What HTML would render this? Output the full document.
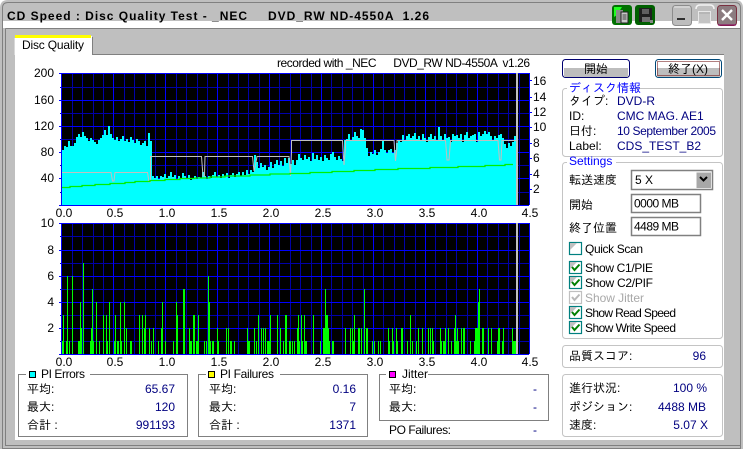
<!DOCTYPE html>
<html><head><meta charset="utf-8">
<style>
html,body{margin:0;padding:0;background:#bfbfbf;width:743px;height:449px;overflow:hidden}
svg{display:block;position:absolute;left:0;top:0}
text{font-family:"Liberation Sans","IPAGothic","Noto Sans CJK JP",sans-serif;font-size:12px;fill:#000;white-space:pre}
.n{fill:#000080}
.e{text-anchor:end}
.m{text-anchor:middle}
.bl{fill:#0000ff}
.gr{fill:#a8a8a8}
.t{font-weight:bold;font-size:12px}
</style></head>
<body>
<svg width="743" height="449" viewBox="0 0 743 449" xmlns="http://www.w3.org/2000/svg">
<!-- window -->
<rect width="743" height="449" fill="#fff"/>
<path d="M0 449V8Q0 0 8 0H735Q743 0 743 8V449Z" fill="#bfbfbf"/>
<path d="M2.500 449V8Q2.500 2.500 8 2.500H735Q740.500 2.500 740.500 8V449" fill="none" stroke="#808080"/>
<rect x="3" y="21" width="737" height="7" fill="#fff"/>
<path d="M5.500 28.500H741M5.500 28.500V445.500H741" fill="none" stroke="#808080"/>
<path d="M2 448.500H741" stroke="#808080"/>
<text x="7" y="20" class="t" textLength="240" lengthAdjust="spacing">CD Speed : Disc Quality Test - _NEC</text>
<text x="268" y="20" class="t" textLength="161" lengthAdjust="spacing">DVD_RW ND-4550A  1.26</text>
<!-- title icons -->
<rect x="612" y="5" width="20" height="20" rx="3" fill="#007000"/>
<path d="M614 7h8l-5 8-3 2z" fill="#20ff20"/>
<path d="M616 10h7v13h-7z" fill="#8a8a8a"/><path d="M621 12h7v11h-7z" fill="#c8c8c8" stroke="#202020"/>
<path d="M622.500 15h4M622.500 17h4M622.500 19h4" stroke="#404040"/>
<rect x="635" y="5" width="20" height="20" rx="3" fill="#006000"/>
<path d="M639 8h13v14h-13z" fill="#202020"/><path d="M642 9h7v5h-7z" fill="#606060"/><path d="M642 17h8v5h-8z" fill="#707070"/><rect x="650" y="20" width="3" height="3" fill="#888"/>
<rect x="672.500" y="5.500" width="19" height="20" rx="3" fill="#bdbdbd" stroke="#8c8c8c"/>
<path d="M674 7h16" stroke="#e8e8e8"/>
<rect x="677" y="18" width="8" height="2" fill="#303030"/>
<path d="M696 9q0-4 4-4h10q4 0 4 4" fill="none" stroke="#f4f4f4" stroke-width="1.500"/>
<rect x="698.500" y="11.500" width="12" height="12" fill="#c4c4c4" stroke="#e8e8e8"/>
<path d="M699 13h11" stroke="#a8a8a8"/>
<rect x="717.500" y="5.500" width="19" height="20" rx="3" fill="#8c7c80" stroke="#7a3040"/>
<path d="M718 25h18" stroke="#900060"/>
<path d="M722 10l10 10M732 10l-10 10" stroke="#fff" stroke-width="2.400"/>
<!-- tab + panel -->
<rect x="15" y="55" width="709" height="385" fill="#fff"/>
<rect x="15" y="36" width="77" height="20" fill="#fff"/>
<rect x="15" y="35" width="76" height="3" fill="#ffff00"/>
<path d="M92.500 37V54.500H724" fill="none" stroke="#808080"/>
<path d="M14.500 38V55" stroke="#d8d8d8"/>
<text x="22" y="49" textLength="62">Disc Quality</text>
<text x="277" y="67" textLength="253" lengthAdjust="spacing">recorded with _NEC      DVD_RW ND-4550A  v1.26</text>
<!-- chart 1 -->
<rect x="61" y="73" width="468" height="132" fill="#000"/>
<path shape-rendering="crispEdges" stroke="#0000a8" d="M72.500 73V205M82.500 73V205M93.500 73V205M103.500 73V205M124.500 73V205M134.500 73V205M145.500 73V205M155.500 73V205M176.500 73V205M186.500 73V205M197.500 73V205M207.500 73V205M228.500 73V205M238.500 73V205M248.500 73V205M259.500 73V205M279.500 73V205M290.500 73V205M300.500 73V205M311.500 73V205M331.500 73V205M342.500 73V205M352.500 73V205M363.500 73V205M383.500 73V205M394.500 73V205M404.500 73V205M415.500 73V205M435.500 73V205M446.500 73V205M456.500 73V205M467.500 73V205M487.500 73V205M498.500 73V205M508.500 73V205M519.500 73V205M60 87.500H529M60 113.500H529M60 139.500H529M60 165.500H529M60 192.500H529"/>
<path shape-rendering="crispEdges" stroke="#0000ff" d="M61.500 73V205M113.500 73V205M165.500 73V205M217.500 73V205M269.500 73V205M321.500 73V205M373.500 73V205M425.500 73V205M477.500 73V205M529.500 73V205M59 73.500H529M59 100.500H529M59 126.500H529M59 152.500H529M59 178.500H529M59 205.500H529"/>
<!-- cyan -->
<g fill="#00ffff" shape-rendering="crispEdges">
<path d="M62 205V150h2V146h2V147h2V141h2V146h2V146h2V143h2V137h2V134h2V137h2V132h2V136h2V138h2V141h2V138h2V140h2V142h2V144h2V140h2V138h2V135h2V130h2V135h2V126h2V134h2V138h2V140h2V137h2V141h2V139h2V136h2V141h2V139h2V142h2V137h2V140h2V143h2V139h2V141h2V145h2V143h2V141h2V146h2V133h2V141h2V205Z"/>
<path d="M152 205V176h2V178h2V176h2V179h2V176h2V177h2V174h2V178h2V176h2V172h2V177h2V175h2V179h2V176h2V178h2V173h2V176h2V178h2V175h2V180h2V178h2V176h2V179h2V177h2V178h2V172h2V176h2V179h2V176h2V178h2V175h2V172h2V177h2V175h2V178h2V174h2V176h2V173h2V178h2V175h2V173h2V177h2V174h2V172h2V176h2V172h2V175h2V170h2V174h2V170h2V172h2V205Z"/>
<path d="M254 205V155h2V162h2V168h2V163h2V167h2V165h2V170h2V167h2V162h2V168h2V164h2V160h2V165h2V161h2V166h2V158h2V163h2V158h2V205Z"/>
<path d="M290 205V164h2V160h2V165h2V160h2V154h2V158h2V160h2V155h2V159h2V157h2V161h2V153h2V159h2V155h2V160h2V157h2V161h2V155h2V158h2V160h2V154h2V152h2V157h2V160h2V156h2V159h2V161h2V205Z"/>
<path d="M344 205V140h2V139h2V134h2V140h2V137h2V132h2V136h2V138h2V129h2V130h2V138h2V148h2V205Z"/>
<path d="M368 205V156h2V152h2V154h2V150h2V155h2V152h2V149h2V141h2V150h2V153h2V150h2V149h2V153h2V150h2V205Z"/>
<path d="M396 205V143h2V140h2V142h2V135h2V140h2V136h2V134h2V138h2V136h2V133h2V139h2V136h2V140h2V134h2V138h2V142h2V137h2V134h2V139h2V136h2V141h2V127h2V136h2V140h2V134h2V138h2V137h2V142h2V134h2V136h2V135h2V138h2V134h2V142h2V135h2V132h2V138h2V136h2V135h2V134h2V142h2V132h2V136h2V134h2V131h2V134h2V132h2V136h2V140h2V136h2V138h2V135h2V134h2V138h2V144h2V148h2V143h2V146h2V142h2V136h2V205Z"/>
</g>
<path fill="none" stroke="#c0c0c0" stroke-width="1" d="M62 172.500H111L112.500 181L114 181L115 172.500H147.500L149 182L150.500 182V156.500H201.500L203 176H204.500L205 156.500H252.500L254 171L255.500 165L257 156.500H289L290.500 176L291.500 152V140.500H342.500L344 165L345.500 148V140.500H394L395.500 161L397 148V140.500H445.500L447 160L449 160L450.500 140.500H498L499.500 160L501 160L502 140.500H516"/>
<path fill="none" stroke="#00f000" stroke-width="1.300" d="M62 187.500H70V186.500H82V185.500H95V184.500H110V183.500H125V182.500H135V181.500H150V180.500H165V179.500H180V178.500H195V178H210V177H225V176H250V175H270V174H290V173.500H310V172.500H332V171.500H354V170.500H375V169.500H398V168.500H430V167.500H458V166.500H485V165.500H505V164.500H513"/>
<rect x="516" y="73" width="2" height="132" fill="#c0c0c0"/>
<!-- right ticks chart1 -->
<path stroke="#0000ff" d="M529 80.500h3M529 97.500h3M529 112.500h3M529 127.500h3M529 143.500h3M529 158.500h3M529 174.500h3M529 189.500h3"/>
<text x="533" y="85">16</text><text x="533" y="101">14</text><text x="533" y="116">12</text><text x="533" y="131">10</text><text x="533" y="147">8</text><text x="533" y="162">6</text><text x="533" y="178">4</text><text x="533" y="193">2</text>
<text x="54" y="77" class="e">200</text><text x="54" y="104" class="e">160</text><text x="54" y="130" class="e">120</text><text x="54" y="156" class="e">80</text><text x="54" y="182" class="e">40</text>
<text x="64" y="217" class="m">0.0</text><text x="115" y="217" class="m">0.5</text><text x="167" y="217" class="m">1.0</text><text x="219" y="217" class="m">1.5</text><text x="271" y="217" class="m">2.0</text><text x="323" y="217" class="m">2.5</text><text x="375" y="217" class="m">3.0</text><text x="427" y="217" class="m">3.5</text><text x="479" y="217" class="m">4.0</text><text x="530" y="217" class="m">4.5</text>
<!-- chart 2 -->
<rect x="61" y="223" width="468" height="131" fill="#000"/>
<path shape-rendering="crispEdges" stroke="#0000a8" d="M72.500 223V354M82.500 223V354M93.500 223V354M103.500 223V354M124.500 223V354M134.500 223V354M145.500 223V354M155.500 223V354M176.500 223V354M186.500 223V354M197.500 223V354M207.500 223V354M228.500 223V354M238.500 223V354M248.500 223V354M259.500 223V354M279.500 223V354M290.500 223V354M300.500 223V354M311.500 223V354M331.500 223V354M342.500 223V354M352.500 223V354M363.500 223V354M383.500 223V354M394.500 223V354M404.500 223V354M415.500 223V354M435.500 223V354M446.500 223V354M456.500 223V354M467.500 223V354M487.500 223V354M498.500 223V354M508.500 223V354M519.500 223V354M60 236.500H529M60 263.500H529M60 289.500H529M60 315.500H529M60 341.500H529"/>
<path shape-rendering="crispEdges" stroke="#0000ff" d="M61.500 223V354M113.500 223V354M165.500 223V354M217.500 223V354M269.500 223V354M321.500 223V354M373.500 223V354M425.500 223V354M477.500 223V354M529.500 223V354M59 223.500H529M59 250.500H529M59 276.500H529M59 302.500H529M59 328.500H529M59 354.500H529"/>
<!-- bars width 1 -->
<path fill="none" stroke="#00ff00" shape-rendering="crispEdges" d="M63.500 354V315M67.500 354V276M69.500 354V341M72.500 354V276M80.500 354V302M81.500 354V328M83.500 354V263M91.500 354V328M92.500 354V289M93.500 354V341M96.500 354V302M99.500 354V341M103.500 354V315M106.500 354V315M107.500 354V341M109.500 354V302M114.500 354V341M115.500 354V315M120.500 354V302M121.500 354V341M124.500 354V302M126.500 354V328M139.500 354V315M142.500 354V315M144.500 354V328M145.500 354V315M149.500 354V328M151.500 354V341M153.500 354V328M158.500 354V341M161.500 354V328M162.500 354V302M165.500 354V341M173.500 354V341M176.500 354V302M177.500 354V315M189.500 354V328M198.500 354V315M204.500 354V341M206.500 354V341M208.500 354V276M209.500 354V302M210.500 354V341M217.500 354V328M218.500 354V341M226.500 354V328M228.500 354V328M234.500 354V341M247.500 354V328M254.500 354V328M256.500 354V341M258.500 354V315M261.500 354V328M263.500 354V328M265.500 354V328M270.500 354V315M277.500 354V315M280.500 354V328M283.500 354V341M286.500 354V328M292.500 354V341M294.500 354V341M297.500 354V328M298.500 354V315M299.500 354V341M301.500 354V315M302.500 354V341M304.500 354V315M313.500 354V315M320.500 354V341M325.500 354V289M328.500 354V328M329.500 354V341M345.500 354V328M350.500 354V328M352.500 354V328M353.500 354V341M354.500 354V315M361.500 354V328M364.500 354V289M372.500 354V341M374.500 354V341M378.500 354V341M380.500 354V341M388.500 354V328M389.500 354V341M392.500 354V328M393.500 354V341M396.500 354V328M397.500 354V341M407.500 354V341M410.500 354V315M412.500 354V341M416.500 354V341M418.500 354V328M422.500 354V328M428.500 354V328M430.500 354V328M432.500 354V328M433.500 354V341M440.500 354V328M441.500 354V341M445.500 354V328M448.500 354V328M451.500 354V341M454.500 354V328M455.500 354V315M456.500 354V341M457.500 354V328M458.500 354V341M461.500 354V328M470.500 354V341M474.500 354V341M479.500 354V289M488.500 354V328M491.500 354V328M497.500 354V341M503.500 354V328M512.500 354V328"/>
<!-- bars width 2 -->
<path fill="none" stroke="#00ff00" stroke-width="2" shape-rendering="crispEdges" d="M63 354V341M67 354V341M91 354V341M118 354V341M131 354V341M184 354V289M191 354V341M194 354V315M197 354V341M213 354V341M231 354V341M249 354V341M286 354V315M290 354V341M306 354V341M324 354V328M327 354V315M333 354V341M359 354V328M367 354V328M402 354V328M464 354V328M479 354V302M483 354V328M499 354V328M503 354V341"/>
<!-- bars width 3 -->
<path fill="none" stroke="#00ff00" stroke-width="3" shape-rendering="crispEdges" d="M79.500 354V341M268.500 354V341M444.500 354V341M476.500 354V328M514.500 354V341"/>
<rect x="516" y="223" width="2" height="131" fill="#c0c0c0"/>
<text x="54" y="227" class="e">10</text><text x="54" y="254" class="e">8</text><text x="54" y="280" class="e">6</text><text x="54" y="306" class="e">4</text><text x="54" y="332" class="e">2</text>
<text x="64" y="366" class="m">0.0</text><text x="115" y="366" class="m">0.5</text><text x="167" y="366" class="m">1.0</text><text x="219" y="366" class="m">1.5</text><text x="271" y="366" class="m">2.0</text><text x="323" y="366" class="m">2.5</text><text x="375" y="366" class="m">3.0</text><text x="427" y="366" class="m">3.5</text><text x="479" y="366" class="m">4.0</text><text x="530" y="366" class="m">4.5</text>
<!-- stats boxes -->
<g fill="#fff" stroke="#808080">
<rect x="18.500" y="374.500" width="169" height="62"/>
<rect x="198.500" y="374.500" width="169" height="62"/>
<rect x="379.500" y="374.500" width="169" height="46"/>
</g>
<rect x="26" y="370" width="64" height="8" fill="#fff"/><rect x="206" y="370" width="74" height="8" fill="#fff"/><rect x="386" y="370" width="42" height="8" fill="#fff"/>
<rect x="29.500" y="371.500" width="6" height="6" fill="#00ffff" stroke="#000"/>
<rect x="208.500" y="371.500" width="6" height="6" fill="#ffff00" stroke="#000"/>
<rect x="389.500" y="371.500" width="6" height="6" fill="#ff00ff" stroke="#000"/>
<text x="41" y="378" textLength="44">PI Errors</text>
<text x="220" y="378" textLength="54">PI Failures</text>
<text x="402" y="378">Jitter</text>
<text x="27" y="393">平均:</text><text x="27" y="411">最大:</text><text x="27" y="429">合計 :</text>
<text x="175" y="393" class="n e">65.67</text><text x="175" y="411" class="n e">120</text><text x="175" y="429" class="n e">991193</text>
<text x="209" y="393">平均:</text><text x="209" y="411">最大:</text><text x="209" y="429">合計 :</text>
<text x="356" y="393" class="n e">0.16</text><text x="356" y="411" class="n e">7</text><text x="356" y="429" class="n e">1371</text>
<text x="389" y="393">平均:</text><text x="389" y="411">最大:</text>
<text x="537" y="393" class="n e">-</text><text x="537" y="411" class="n e">-</text>
<text x="389" y="434" textLength="62">PO Failures:</text>
<text x="537" y="434" class="n e">-</text>
<!-- buttons -->
<rect x="562.500" y="59.500" width="67" height="18" rx="3" fill="#fff" stroke="#000070"/>
<rect x="564" y="68" width="64" height="9" fill="#bdbdbd"/>
<text x="596" y="73" class="m">開始</text>
<rect x="655.500" y="59.500" width="66" height="18" rx="3" fill="#fff" stroke="#004878"/>
<rect x="657" y="68" width="63" height="9" fill="#bdbdbd"/>
<rect x="657.500" y="61.500" width="62" height="14" fill="none" stroke="#600" stroke-dasharray="1 1"/>
<text x="688" y="73" class="m">終了(X)</text>
<!-- right group boxes -->
<g fill="none" stroke="#c4c4c4">
<rect x="562.500" y="88.500" width="160" height="68" rx="3"/>
<rect x="562.500" y="162.500" width="160" height="176" rx="3"/>
<rect x="562.500" y="345.500" width="160" height="22" rx="3"/>
<rect x="562.500" y="374.500" width="160" height="62" rx="3"/>
</g>
<rect x="567" y="84" width="63" height="8" fill="#fff"/><rect x="567" y="158" width="49" height="8" fill="#fff"/>
<text x="569" y="92" class="bl">ディスク情報</text>
<text x="569" y="165" class="bl">Settings</text>
<text x="569" y="105">タイプ:</text><text x="617" y="105" class="n">DVD-R</text>
<text x="569" y="120">ID:</text><text x="617" y="120" class="n">CMC MAG. AE1</text>
<text x="569" y="135">日付:</text><text x="617" y="135" class="n" textLength="99">10 September 2005</text>
<text x="569" y="150">Label:</text><text x="617" y="150" class="n">CDS_TEST_B2</text>
<!-- settings -->
<text x="569" y="184">転送速度</text>
<rect x="631.500" y="170.500" width="81" height="19" fill="#fff" stroke="#808080" stroke-width="1.500"/>
<text x="635" y="184">5 X</text>
<rect x="696" y="172" width="15" height="16" fill="#a8a8a8"/>
<path d="M696 172h15M696 172v16" stroke="#fff"/>
<path d="M700 177l3.500 3.500 3.500-3.500" fill="none" stroke="#000" stroke-width="2"/>
<text x="569" y="209">開始</text>
<rect x="631.500" y="194.500" width="69" height="18" fill="#fff" stroke="#808080" stroke-width="1.500"/>
<text x="634" y="207.500" textLength="45">0000 MB</text>
<text x="569" y="232">終了位置</text>
<rect x="631.500" y="217.500" width="69" height="18" fill="#fff" stroke="#808080" stroke-width="1.500"/>
<text x="634" y="230.500" textLength="45">4489 MB</text>
<g fill="#fff" stroke="#008080" stroke-width="1.200">
<rect x="569.500" y="242.500" width="12" height="12"/>
<rect x="569.500" y="261.500" width="12" height="12"/>
<rect x="569.500" y="276.500" width="12" height="12"/>
<rect x="569.500" y="306.500" width="12" height="12"/>
<rect x="569.500" y="321.500" width="12" height="12"/>
</g>
<rect x="569.500" y="291.500" width="12" height="12" fill="#fff" stroke="#c0c0c0" stroke-width="1.200"/>
<g fill="#c0c0c0">
<path d="M570 243h7l-7 7z"/><path d="M570 262h7l-7 7z"/><path d="M570 277h7l-7 7z"/><path d="M570 307h7l-7 7z"/><path d="M570 322h7l-7 7z"/>
</g>
<g fill="none" stroke="#008000" stroke-width="2">
<path d="M572 267l2.500 3 5-5.500"/><path d="M572 282l2.500 3 5-5.500"/><path d="M572 312l2.500 3 5-5.500"/><path d="M572 327l2.500 3 5-5.500"/>
</g>
<path d="M572 297l2.500 3 5-5.500" fill="none" stroke="#b8b8b8" stroke-width="2"/>
<text x="585" y="253" textLength="58">Quick Scan</text>
<text x="585" y="272" textLength="68">Show C1/PIE</text>
<text x="585" y="287" textLength="68">Show C2/PIF</text>
<text x="585" y="302" class="gr" textLength="59">Show Jitter</text>
<text x="585" y="317" textLength="91">Show Read Speed</text>
<text x="585" y="332" textLength="91">Show Write Speed</text>
<!-- score -->
<text x="569" y="360">品質スコア:</text><text x="706" y="360" class="n e">96</text>
<text x="569" y="392">進行状況:</text><text x="707" y="392" class="n e">100 %</text>
<text x="569" y="411">ポジション:</text><text x="706" y="411" class="n e">4488 MB</text>
<text x="569" y="429">速度:</text><text x="708" y="429" class="n e">5.07 X</text>
</svg>
</body></html>
